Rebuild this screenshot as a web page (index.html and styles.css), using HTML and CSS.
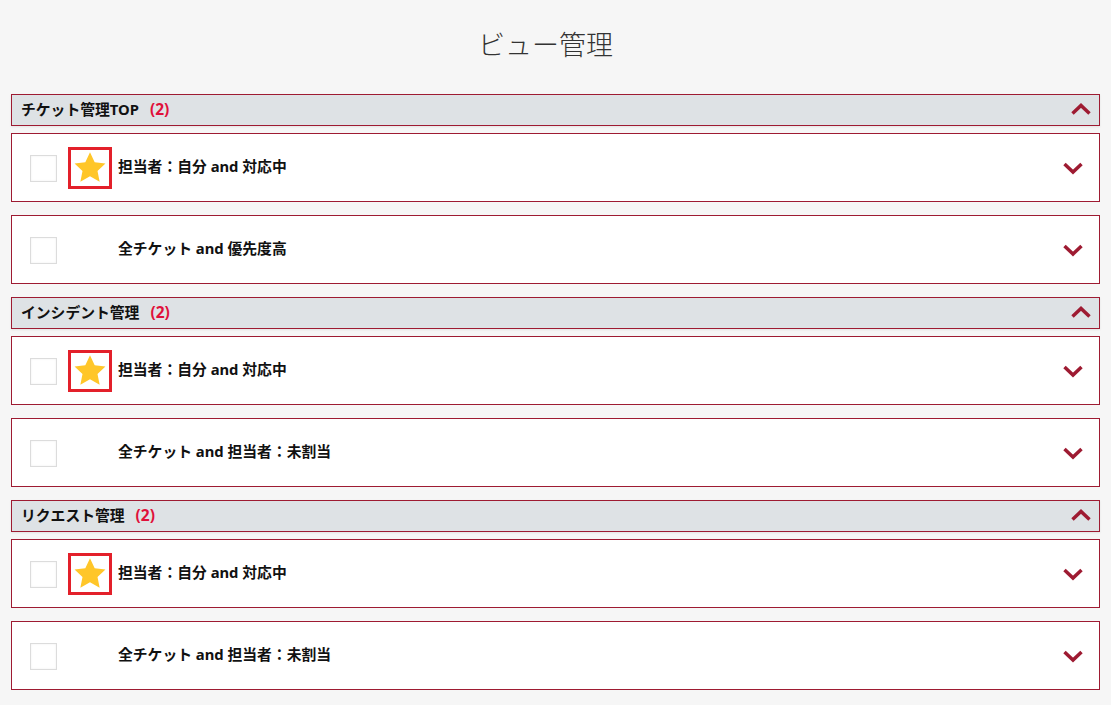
FILE: index.html
```html
<!DOCTYPE html>
<html lang="ja">
<head>
    <meta charset="UTF-8">
    <title>ビュー管理</title>
    <link rel="stylesheet" href="styles.css">
</head>
<body>
    <main class="page">
        <h1 class="title">ビュー管理</h1>

        <section class="group">
            <div class="group-head">
                <span class="group-name">チケット管理TOP</span>
                <span class="count">(2)</span>
                <svg class="chev-up" width="20" height="12" viewBox="0 0 20 12"><polyline points="1.5,10.5 10,2.5 18.5,10.5" /></svg>
            </div>
            <div class="view-card">
                <span class="check"></span>
                <span class="fav on">
                    <svg width="34" height="33" viewBox="0 0 24 23"><path d="M12 0.8l3.3 7 7.6 0.9-5.6 5.2 1.5 7.6L12 17.7l-6.8 3.8 1.5-7.6L1.1 8.7l7.6-0.9z" /></svg>
                </span>
                <span class="view-name">担当者：自分 and 対応中</span>
                <svg class="chev-down" width="20" height="13" viewBox="0 0 20 13"><polyline points="1.5,2 10,10 18.5,2" /></svg>
            </div>
            <div class="view-card">
                <span class="check"></span>
                <span class="fav"></span>
                <span class="view-name">全チケット and 優先度高</span>
                <svg class="chev-down" width="20" height="13" viewBox="0 0 20 13"><polyline points="1.5,2 10,10 18.5,2" /></svg>
            </div>
        </section>

        <section class="group">
            <div class="group-head">
                <span class="group-name">インシデント管理</span>
                <span class="count">(2)</span>
                <svg class="chev-up" width="20" height="12" viewBox="0 0 20 12"><polyline points="1.5,10.5 10,2.5 18.5,10.5" /></svg>
            </div>
            <div class="view-card">
                <span class="check"></span>
                <span class="fav on">
                    <svg width="34" height="33" viewBox="0 0 24 23"><path d="M12 0.8l3.3 7 7.6 0.9-5.6 5.2 1.5 7.6L12 17.7l-6.8 3.8 1.5-7.6L1.1 8.7l7.6-0.9z" /></svg>
                </span>
                <span class="view-name">担当者：自分 and 対応中</span>
                <svg class="chev-down" width="20" height="13" viewBox="0 0 20 13"><polyline points="1.5,2 10,10 18.5,2" /></svg>
            </div>
            <div class="view-card">
                <span class="check"></span>
                <span class="fav"></span>
                <span class="view-name">全チケット and 担当者：未割当</span>
                <svg class="chev-down" width="20" height="13" viewBox="0 0 20 13"><polyline points="1.5,2 10,10 18.5,2" /></svg>
            </div>
        </section>

        <section class="group">
            <div class="group-head">
                <span class="group-name">リクエスト管理</span>
                <span class="count">(2)</span>
                <svg class="chev-up" width="20" height="12" viewBox="0 0 20 12"><polyline points="1.5,10.5 10,2.5 18.5,10.5" /></svg>
            </div>
            <div class="view-card">
                <span class="check"></span>
                <span class="fav on">
                    <svg width="34" height="33" viewBox="0 0 24 23"><path d="M12 0.8l3.3 7 7.6 0.9-5.6 5.2 1.5 7.6L12 17.7l-6.8 3.8 1.5-7.6L1.1 8.7l7.6-0.9z" /></svg>
                </span>
                <span class="view-name">担当者：自分 and 対応中</span>
                <svg class="chev-down" width="20" height="13" viewBox="0 0 20 13"><polyline points="1.5,2 10,10 18.5,2" /></svg>
            </div>
            <div class="view-card">
                <span class="check"></span>
                <span class="fav"></span>
                <span class="view-name">全チケット and 担当者：未割当</span>
                <svg class="chev-down" width="20" height="13" viewBox="0 0 20 13"><polyline points="1.5,2 10,10 18.5,2" /></svg>
            </div>
        </section>
    </main>
</body>
</html>
```

FILE: styles.css
```css
body {
    margin: 0;
    padding: 0;
    background-color: #f6f6f6;
    font-family: "Noto Sans", "Noto Sans CJK JP", sans-serif;
    color: #111;
}
.page {
    padding: 0 11px 20px;
}
.title {
    margin: 24px 0 30px;
    padding-right: 20px;
    font-family: "Noto Sans CJK JP", sans-serif;
    font-size: 27px;
    font-weight: 300;
    line-height: 40px;
    text-align: center;
    color: #333;
}
.group-head {
    display: flex;
    align-items: center;
    height: 32px;
    box-sizing: border-box;
    padding: 0 8px 3px 9px;
    background-color: #dee2e5;
    border: 1px solid #9e1b32;
    box-shadow: 0 1px 2px rgba(0, 0, 0, 0.08);
    font-size: 14.8px;
    font-weight: bold;
    line-height: 20px;
}
.count {
    margin-left: 11px;
    font-size: 15.5px;
    color: #e0103a;
}
.chev-up {
    margin-left: auto;
    margin-top: 1px;
}
.chev-up polyline,
.chev-down polyline {
    fill: none;
    stroke: #9e1b32;
    stroke-width: 3.5;
}
.view-card {
    display: flex;
    align-items: center;
    height: 69px;
    box-sizing: border-box;
    margin-top: 7px;
    margin-bottom: 13px;
    padding: 0 16px 0 18px;
    background: white;
    border: 1px solid #9e1b32;
}
.view-card + .view-card {
    margin-top: 0;
}
.check {
    width: 27px;
    height: 27px;
    box-sizing: border-box;
    border: 1px solid #dcdcdc;
    box-shadow: inset 0 0 2px rgba(0, 0, 0, 0.08);
    background: white;
    margin-top: 1px;
}
.fav {
    display: flex;
    align-items: center;
    justify-content: center;
    width: 44px;
    height: 42px;
    box-sizing: border-box;
    margin-left: 11px;
    margin-right: 6px;
}
.fav.on {
    border: 3px solid #e3202a;
}
.fav svg path {
    fill: #ffc629;
}
.view-name {
    margin-bottom: 4px;
    font-size: 14.8px;
    font-weight: bold;
    line-height: 20px;
}
.chev-down {
    margin-left: auto;
    margin-top: 2px;
}
```
